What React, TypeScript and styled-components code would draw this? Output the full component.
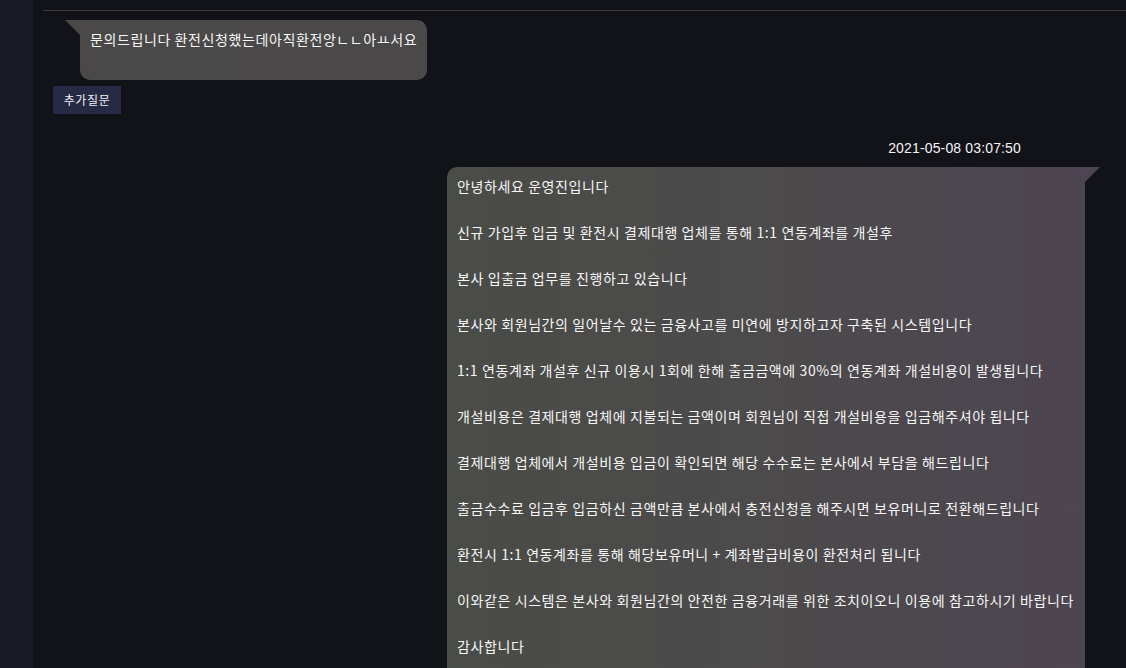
import React from "react";
import styled, { createGlobalStyle } from "styled-components";

const Global = createGlobalStyle`
  html, body { margin: 0; padding: 0; background: #121219; }
  body { font-family: "Noto Sans CJK KR", "Noto Sans", sans-serif; color: #f2f2f2; overflow: hidden; }
`;

const Page = styled.div`
  display: grid;
  grid-template-columns: 33px 1fr;
  width: 1126px;
  height: 668px;
  overflow: hidden;
`;

const SideStrip = styled.div`
  background: #1a1a27;
`;

const Main = styled.div`
  background: #121219;
  padding: 10px 0 0 10px;
  display: flex;
  flex-direction: column;
`;

const Divider = styled.div`
  height: 1px;
  background: #3b3b3e;
`;

const Row = styled.div<{ $align: "start" | "end" }>`
  display: flex;
  flex-direction: column;
  align-items: ${(p) => (p.$align === "start" ? "flex-start" : "flex-end")};
`;

const Bubble = styled.div<{ $side: "left" | "right"; $width: number }>`
  position: relative;
  box-sizing: border-box;
  width: ${(p) => p.$width}px;
  font-size: 14px;
  letter-spacing: 0.6px;
  line-height: 23px;
  white-space: nowrap;
  color: #f6f6f6;
  background: ${(p) =>
    p.$side === "left"
      ? "linear-gradient(90deg, #4a4948, #4b484a)"
      : "linear-gradient(90deg, #4a4c47, #4c4a4b 50%, #4d4551)"};
  border-radius: ${(p) => (p.$side === "left" ? "0 10px 10px 10px" : "10px 0 10px 10px")};
  &::before {
    content: "";
    position: absolute;
    top: 0;
    width: 15px;
    height: 15px;
    ${(p) =>
      p.$side === "left"
        ? `left: -15px; background: #4a4948; clip-path: polygon(0 0, 100% 0, 100% 100%);`
        : `right: -15px; background: #4d4551; clip-path: polygon(0 0, 100% 0, 0 100%);`}
  }
`;

const UserBubble = styled(Bubble)`
  margin: 9px 0 0 37px;
  padding: 8px 10px 29px 10px;
`;

const AdminBubble = styled(Bubble)`
  margin: 9px 41px 0 0;
  padding: 8px 10px 10px 10px;
`;

const Para = styled.p`
  margin: 0 0 23px 0;
`;

const FollowButton = styled.button`
  margin: 6px 0 0 10px;
  height: 28px;
  width: 68px;
  padding: 0;
  border: none;
  background: #262a45;
  color: #f0f0f0;
  font-family: "Noto Sans CJK KR", sans-serif;
  font-size: 12px;
  letter-spacing: 0.6px;
  line-height: 28px;
  cursor: pointer;
`;

const Timestamp = styled.div`
  margin: 24px 105px 0 0;
  font-family: "Liberation Sans", Arial, sans-serif;
  font-size: 14px;
  letter-spacing: 0.15px;
  line-height: 20px;
  color: #f4f4f4;
`;

const answer = [
  "안녕하세요 운영진입니다",
  "신규 가입후 입금 및 환전시 결제대행 업체를 통해 1:1 연동계좌를 개설후",
  "본사 입출금 업무를 진행하고 있습니다",
  "본사와 회원님간의 일어날수 있는 금융사고를 미연에 방지하고자 구축된 시스템입니다",
  "1:1 연동계좌 개설후 신규 이용시 1회에 한해 출금금액에 30%의 연동계좌 개설비용이 발생됩니다",
  "개설비용은 결제대행 업체에 지불되는 금액이며 회원님이 직접 개설비용을 입금해주셔야 됩니다",
  "결제대행 업체에서 개설비용 입금이 확인되면 해당 수수료는 본사에서 부담을 해드립니다",
  "출금수수료 입금후 입금하신 금액만큼 본사에서 충전신청을 해주시면 보유머니로 전환해드립니다",
  "환전시 1:1 연동계좌를 통해 해당보유머니 + 계좌발급비용이 환전처리 됩니다",
  "이와같은 시스템은 본사와 회원님간의 안전한 금융거래를 위한 조치이오니 이용에 참고하시기 바랍니다",
  "감사합니다",
];

export default function App() {
  return (
    <>
      <Global />
      <Page>
        <SideStrip />
        <Main>
          <Divider />
          <Row $align="start">
            <UserBubble $side="left" $width={347}>
              문의드립니다 환전신청했는데아직환전앙ㄴㄴ아ㅛ서요
            </UserBubble>
            <FollowButton>추가질문</FollowButton>
          </Row>
          <Row $align="end">
            <Timestamp>2021-05-08 03:07:50</Timestamp>
            <AdminBubble $side="right" $width={638}>
              {answer.map((t, i) => (
                <Para key={i}>{t}</Para>
              ))}
            </AdminBubble>
          </Row>
        </Main>
      </Page>
    </>
  );
}
